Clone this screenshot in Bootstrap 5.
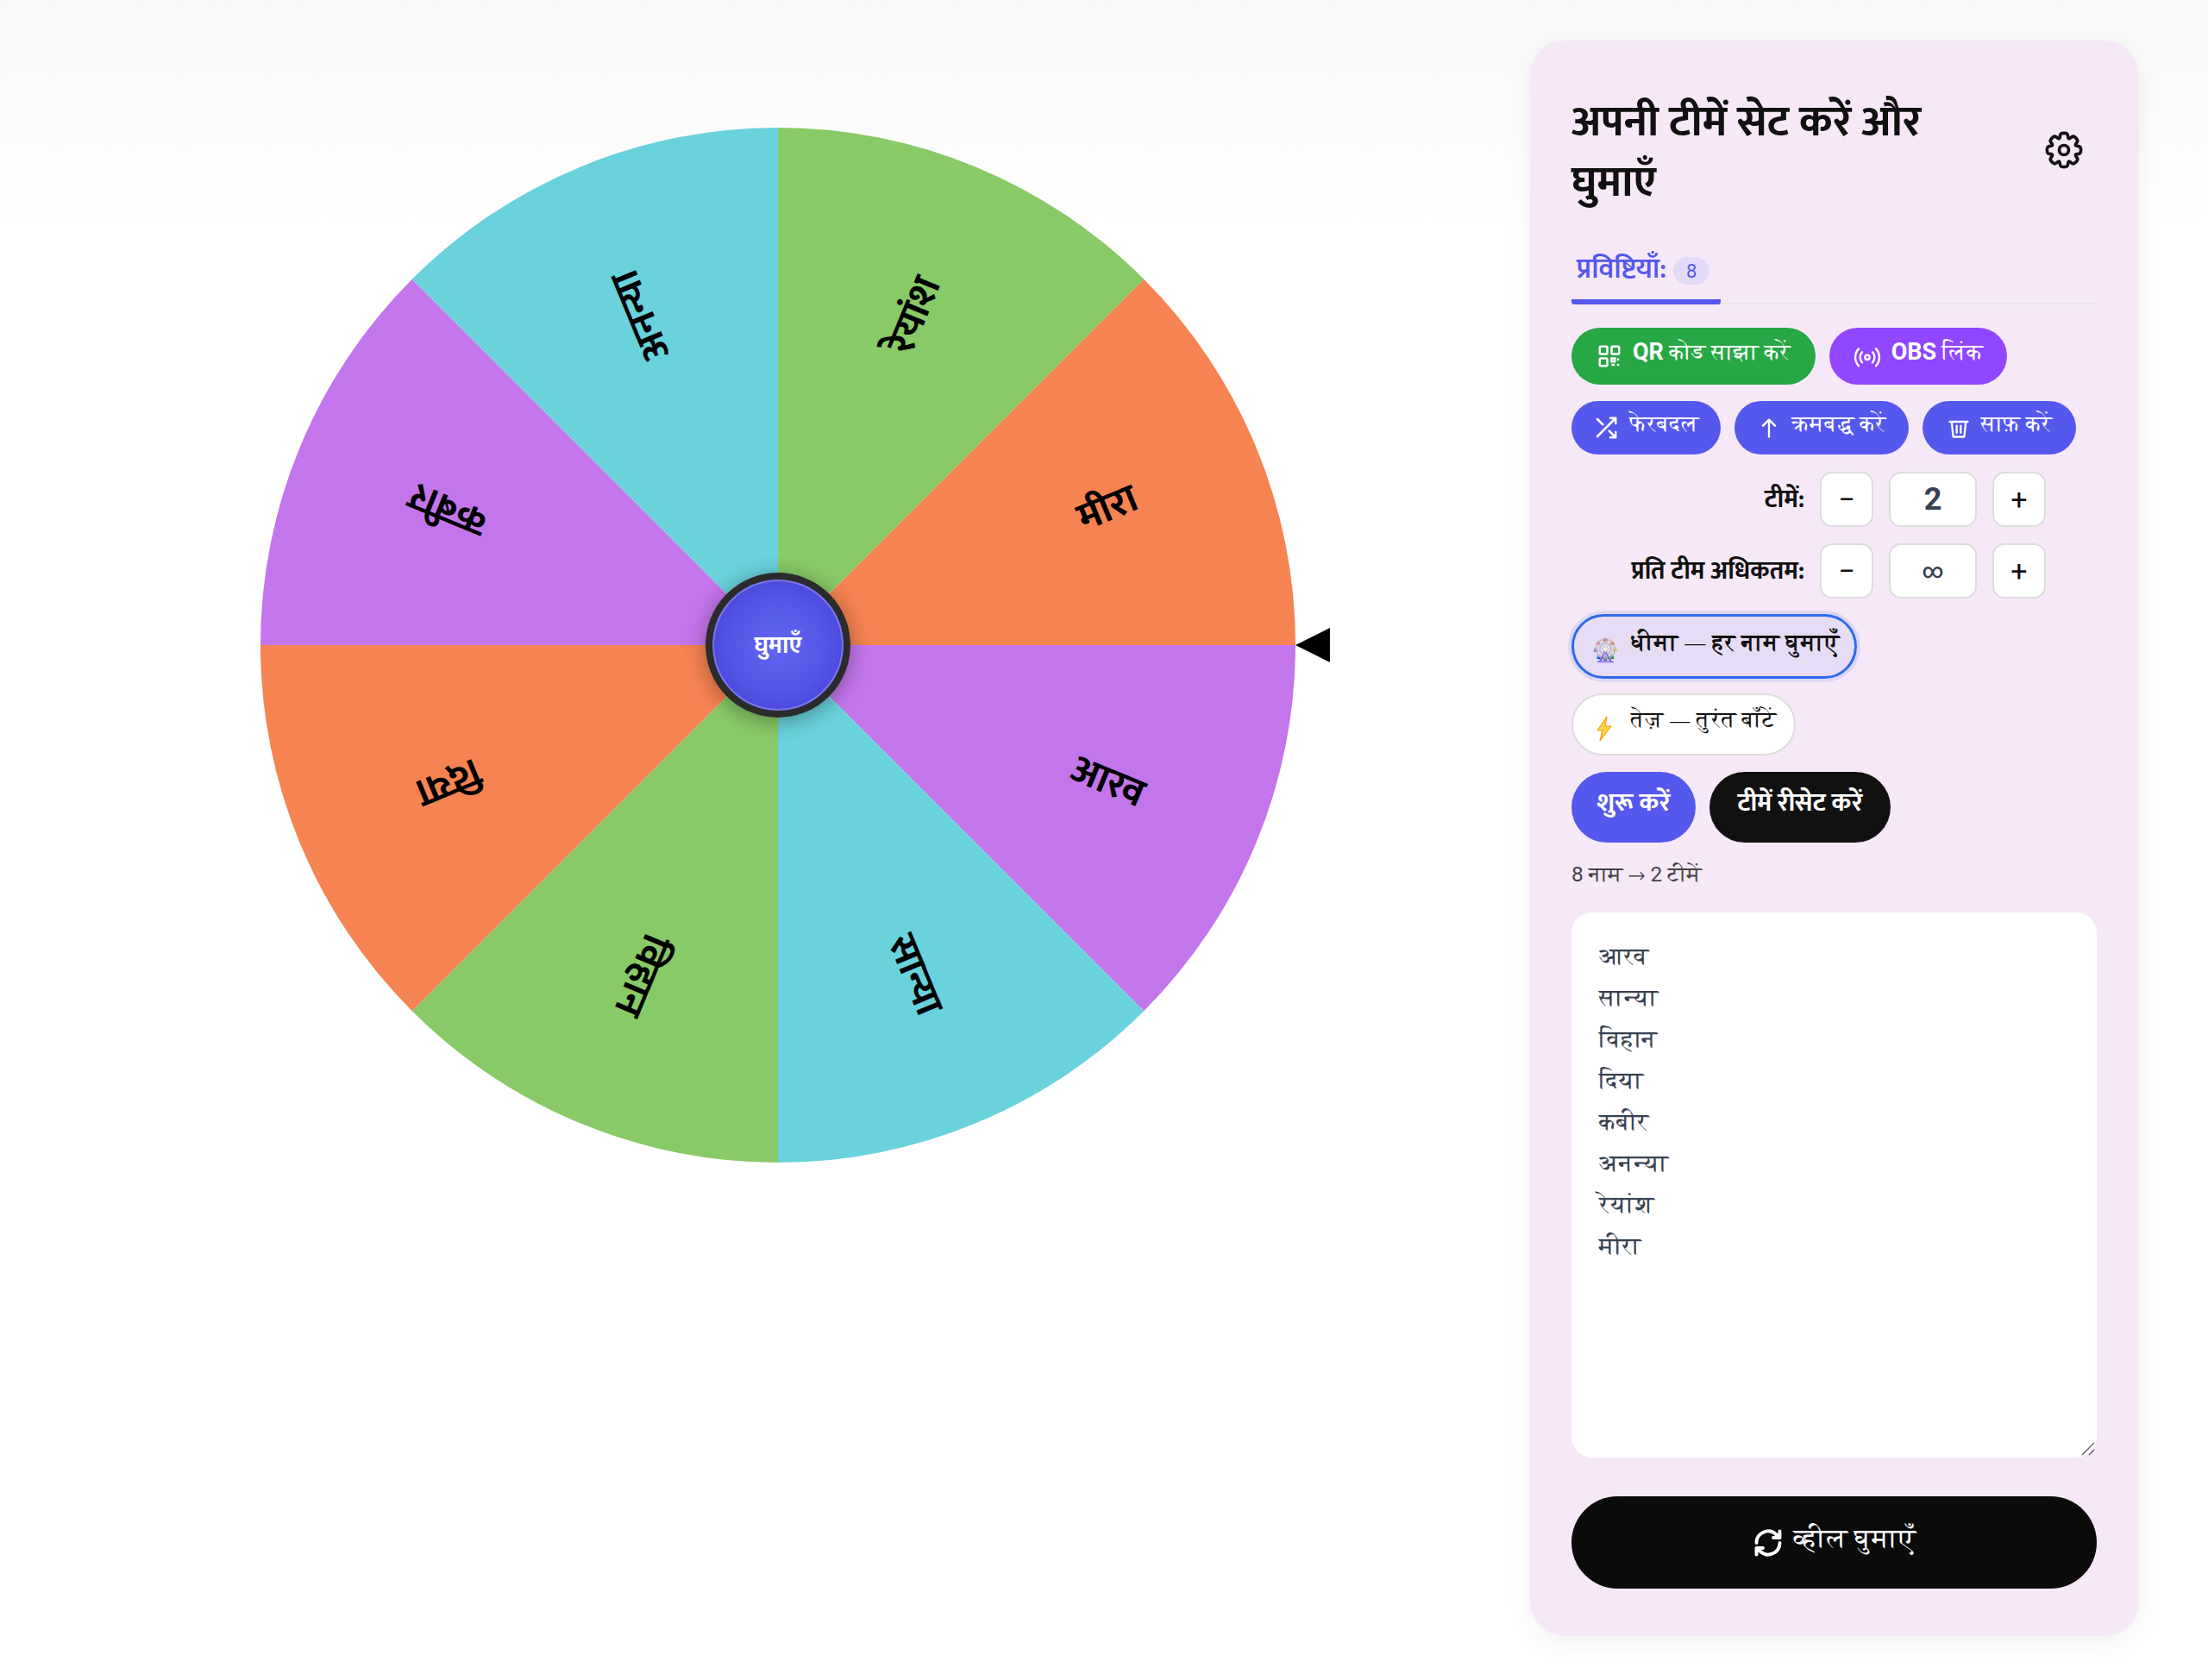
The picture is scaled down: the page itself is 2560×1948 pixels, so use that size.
<!DOCTYPE html>
<html lang="hi">
<head>
<meta charset="utf-8">
<title>टीम व्हील</title>
<link rel="stylesheet" href="https://cdn.jsdelivr.net/npm/bootstrap@5.3.0/dist/css/bootstrap.min.css">
<style>
html,body{height:100%}
body{font-family:Roboto,FreeSerif,"Noto Sans",sans-serif;background:linear-gradient(#f8f8f8 0,#fff 260px) no-repeat #fff;color:#111}
.page-shell{width:2560px;min-height:1948px;padding:47px 80px 50px 0}
.wheel-area{width:1774px;height:1500px}
.wheel-box{width:1229px;height:1200px;margin:101px 0 0 302px}
.wheel-svg{display:block}
.wheel-svg text{font-family:Mukta,FreeSerif,sans-serif;font-weight:700;font-size:46px;text-anchor:middle;dominant-baseline:central;fill:#000}
.hub-btn{left:516px;top:516px;width:168px;height:168px;border-radius:50%;background:radial-gradient(circle,#6366f1 0,#5254e6 55%,#4338ca 100%);border:8px solid #2b2b2b;box-shadow:inset 0 0 0 2px rgba(255,255,255,.25),0 4px 24px rgba(0,0,0,.35);color:#fff;font:700 28px Mukta,FreeSerif,sans-serif;padding:0}
.pointer-mark{left:1200px;top:580px;width:0;height:0;border-style:solid;border-width:20px 40px 20px 0;border-color:transparent #000 transparent transparent}
.side-panel{width:706px;height:1850px;background:#f7e8f8;border-radius:40px;padding:48px 49px 48px 48px;box-shadow:0 8px 32px rgba(0,0,0,.06)}
.panel-title{font:700 50px/70px Mukta,FreeSerif,sans-serif;width:500px;margin:0;color:#111}
.title-row{height:197px;padding-top:12px}
.gear-ic{width:44px;height:44px;margin:45px 16px 0 0}
.tab-strip{height:64px;border-bottom:2px solid #e9e6ea;margin-top:-3px}
.tab-on{width:173px;height:64px;border-bottom:6px solid #5558ec;margin-bottom:-2px;color:#5558ec;font:600 33px Mukta,FreeSerif,sans-serif;padding:0 0 12px 6px;border-radius:0 0 3px 3px}
.count-chip{background:#e4daf8;color:#5558ec;border-radius:16px;font:400 22px Roboto,sans-serif;width:42px;height:32px;margin-top:4px;flex:none}
.pill-b{border:0;border-radius:999px;color:#fff;font-size:25.6px;font-weight:500;display:inline-flex;align-items:center;justify-content:center;gap:12px;padding:0;white-space:nowrap}
.pill-b svg{flex:none}
.lift-t{margin-bottom:10px}
.latin-b{font-weight:700;font-size:27px}
.pill-g{background:#28a745;width:283px;height:66px}
.pill-v{background:#9146ff;width:206px;height:66px}
.pill-i{background:#5558ec;height:62px}
.row-a{margin-top:27px;gap:16px}
.row-b{margin-top:19px;gap:16px}
.w-a{width:173px}.w-b{width:202px}.w-c{width:178px}
.step-row{height:64px;gap:18px}
.step-lab{width:270px;text-align:right;font:700 29px Mukta,FreeSerif,sans-serif;color:#111}
.step-btn{width:62px;height:64px;border:2px solid #dddcdf;background:#fff;border-radius:14px;font-size:34px;color:#111;padding:0;line-height:1;font-weight:400}
.step-val{width:102px;height:64px;border:2px solid #dddcdf;background:#fff;border-radius:14px;color:#374151;font-weight:700;font-size:36px}
.step-val.inf{font-size:24px;font-weight:500}
.step-gap-a{margin-top:20px}.step-gap-b{margin-top:19px}
.mode-on,.mode-off{justify-content:flex-start;color:#111;gap:16px;font-family:FreeSerif,Roboto,sans-serif}
.mode-on .lift-t{margin-bottom:6px}
.mode-off .lift-t{margin-bottom:8px}
.mode-on{width:331px;height:75px;margin-top:18px;background:#e7dcf5;border:3px solid #2c6bed;box-shadow:0 0 0 4px #dcd6f6;border-radius:38px;font-size:26.4px;font-weight:700;padding-left:20px}
.mode-off{width:260px;height:72px;margin-top:17px;background:#fff;border:2px solid #dddcdf;border-radius:36px;font-weight:400;padding-left:21px}
.mode-emoji{width:30px;font-size:26px;line-height:1;margin-top:10px;text-align:center}
.act-row{gap:16px;margin-top:19px}
.act-a,.act-b{font:700 29.5px Mukta,FreeSerif,sans-serif;height:82px}
.act-a{width:144px;background:#5558ec}
.act-b{width:210px;background:#111}
.status-txt{font-size:24.5px;color:#444;margin-top:22px;height:30px;line-height:30px}
.names-wrap{margin-top:29px}
.names-area{display:block;width:100%;height:632px;border:0;border-radius:24px;background:#fff;padding:28px 32px;font:28px/48px FreeSerif,"Liberation Serif",serif;color:#374151;outline:0;resize:none}
.grip-ic{right:2px;bottom:2px}
.go-btn{width:100%;height:107px;margin-top:45px;background:#0b0b0b;font-size:30.4px;font-weight:500;gap:12px}
</style>
</head>
<body>
<div class="page-shell d-flex">
  <main class="wheel-area flex-none">
    <div class="wheel-box position-relative">
      <svg class="wheel-svg" width="1200" height="1200" viewBox="-600 -600 1200 1200">
        <path d="M0 0L600 0A600 600 0 0 1 424.26 424.26Z" fill="#c376ec"/>
        <path d="M0 0L424.26 424.26A600 600 0 0 1 0 600Z" fill="#69d2dd"/>
        <path d="M0 0L0 600A600 600 0 0 1 -424.26 424.26Z" fill="#88ca68"/>
        <path d="M0 0L-424.26 424.26A600 600 0 0 1 -600 0Z" fill="#f68352"/>
        <path d="M0 0L-600 0A600 600 0 0 1 -424.26 -424.26Z" fill="#c376ec"/>
        <path d="M0 0L-424.26 -424.26A600 600 0 0 1 0 -600Z" fill="#69d2dd"/>
        <path d="M0 0L0 -600A600 600 0 0 1 424.26 -424.26Z" fill="#88ca68"/>
        <path d="M0 0L424.26 -424.26A600 600 0 0 1 600 0Z" fill="#f68352"/>
        <text transform="rotate(22.5) translate(414 0)">आरव</text>
        <text transform="rotate(67.5) translate(414 0)">सान्या</text>
        <text transform="rotate(112.5) translate(414 0)">विहान</text>
        <text transform="rotate(157.5) translate(414 0)">दिया</text>
        <text transform="rotate(202.5) translate(414 0)">कबीर</text>
        <text transform="rotate(247.5) translate(414 0)">अनन्या</text>
        <text transform="rotate(292.5) translate(414 0)">रेयांश</text>
        <text transform="rotate(337.5) translate(414 0)">मीरा</text>
      </svg>
      <button class="hub-btn position-absolute d-flex align-items-center justify-content-center" type="button">घुमाएँ</button>
      <span class="pointer-mark position-absolute"></span>
    </div>
  </main>
  <aside class="side-panel flex-none">
    <div class="title-row d-flex justify-content-between align-items-start">
      <h1 class="panel-title">अपनी टीमें सेट करें और घुमाएँ</h1>
      <svg class="gear-ic" viewBox="-12 -12 24 24" fill="none" stroke="#111" stroke-width="2" stroke-linecap="round" stroke-linejoin="round">
        <defs><path id="gear-lobe" d="M7.39-3.06C7.8-2.1 9.2-2.9 10.2-2C10.9-1.3 10.9 1.3 10.2 2C9.2 2.9 7.8 2.1 7.39 3.06"/></defs>
        <circle r="3"/>
        <use href="#gear-lobe"/><use href="#gear-lobe" transform="rotate(45)"/><use href="#gear-lobe" transform="rotate(90)"/><use href="#gear-lobe" transform="rotate(135)"/><use href="#gear-lobe" transform="rotate(180)"/><use href="#gear-lobe" transform="rotate(225)"/><use href="#gear-lobe" transform="rotate(270)"/><use href="#gear-lobe" transform="rotate(315)"/>
      </svg>
    </div>
    <div class="tab-strip">
      <div class="tab-on d-flex align-items-center gap-2"><span>प्रविष्टियाँ:</span><span class="count-chip d-inline-flex align-items-center justify-content-center">8</span></div>
    </div>
    <div class="d-flex row-a">
      <button class="pill-b pill-g" type="button"><svg width="30" height="30" viewBox="0 0 24 24" fill="none" stroke="#fff" stroke-width="2"><rect x="3" y="3" width="7" height="7" rx="1"/><rect x="14" y="3" width="7" height="7" rx="1"/><rect x="3" y="14" width="7" height="7" rx="1"/><path d="M14 14h3v3h-3zM14 20h3M20 14v2M20 19v2"/></svg><span class="lift-t"><span class="latin-b">QR</span> कोड साझा करें</span></button>
      <button class="pill-b pill-v" type="button"><svg width="32" height="32" viewBox="0 0 24 24" fill="none" stroke="#fff" stroke-width="1.8" stroke-linecap="round"><circle cx="12" cy="13" r="2"/><path d="M7.5 8.5a6.5 6.5 0 0 0 0 9M16.5 8.5a6.5 6.5 0 0 1 0 9M4.5 5.5a11 11 0 0 0 0 15M19.5 5.5a11 11 0 0 1 0 15"/></svg><span class="lift-t"><span class="latin-b">OBS</span> लिंक</span></button>
    </div>
    <div class="d-flex row-b">
      <button class="pill-b pill-i w-a" type="button"><svg width="30" height="30" viewBox="0 0 24 24" fill="none" stroke="#fff" stroke-width="2" stroke-linecap="round" stroke-linejoin="round"><path d="M16 3h5v5M4 20 21 3M21 16v5h-5M15 15l6 6M4 4l5 5"/></svg><span class="lift-t">फेरबदल</span></button>
      <button class="pill-b pill-i w-b" type="button"><svg width="28" height="30" viewBox="0 0 24 24" fill="none" stroke="#fff" stroke-width="2" stroke-linecap="round" stroke-linejoin="round"><path d="M12 21V4M6 10l6-6 6 6"/></svg><span class="lift-t">क्रमबद्ध करें</span></button>
      <button class="pill-b pill-i w-c" type="button"><svg width="28" height="30" viewBox="0 0 24 24" fill="none" stroke="#fff" stroke-width="2" stroke-linecap="round" stroke-linejoin="round"><path d="M3 6h18M5 6l1.5 15h11L19 6M10 10v7M14 10v7"/></svg><span class="lift-t">साफ़ करें</span></button>
    </div>
    <div class="d-flex align-items-center step-row step-gap-a">
      <span class="step-lab">टीमें:</span>
      <button class="step-btn" type="button">−</button>
      <span class="step-val d-flex align-items-center justify-content-center">2</span>
      <button class="step-btn" type="button">+</button>
    </div>
    <div class="d-flex align-items-center step-row step-gap-b">
      <span class="step-lab">प्रति टीम अधिकतम:</span>
      <button class="step-btn" type="button">−</button>
      <span class="step-val inf d-flex align-items-center justify-content-center">∞</span>
      <button class="step-btn" type="button">+</button>
    </div>
    <button class="pill-b mode-on d-flex" type="button"><span class="mode-emoji">🎡</span><span class="lift-t">धीमा — हर नाम घुमाएँ</span></button>
    <button class="pill-b mode-off d-flex" type="button"><span class="mode-emoji"><svg width="20" height="30" viewBox="0 0 20 30"><path d="M13 1 2 17h6L5 29 18 12h-7z" fill="#ffd54a" stroke="#f59e0b" stroke-width="1.2" stroke-linejoin="round"/></svg></span><span class="lift-t">तेज़ — तुरंत बाँटें</span></button>
    <div class="d-flex act-row">
      <button class="pill-b act-a" type="button"><span class="lift-t">शुरू करें</span></button>
      <button class="pill-b act-b" type="button"><span class="lift-t">टीमें रीसेट करें</span></button>
    </div>
    <div class="status-txt">8 नाम → 2 टीमें</div>
    <div class="names-wrap position-relative">
      <textarea class="names-area" spellcheck="false">आरव
सान्या
विहान
दिया
कबीर
अनन्या
रेयांश
मीरा</textarea>
      <svg class="grip-ic position-absolute" width="16" height="16" viewBox="0 0 16 16" stroke="#555" stroke-width="1.2" fill="none"><path d="M1 15 15 1M9 15l6-6"/></svg>
    </div>
    <button class="pill-b go-btn" type="button"><svg width="36" height="36" viewBox="0 0 24 24" fill="none" stroke="#fff" stroke-width="2.6" stroke-linecap="round" stroke-linejoin="round"><path d="M3 12a9 9 0 0 1 15-6.7L21 8M21 3v5h-5M21 12a9 9 0 0 1-15 6.7L3 16M3 21v-5h5"/></svg><span class="lift-t">व्हील घुमाएँ</span></button>
  </aside>
</div>
<script src="https://cdn.jsdelivr.net/npm/bootstrap@5.3.0/dist/js/bootstrap.bundle.min.js"></script>
</body>
</html>
